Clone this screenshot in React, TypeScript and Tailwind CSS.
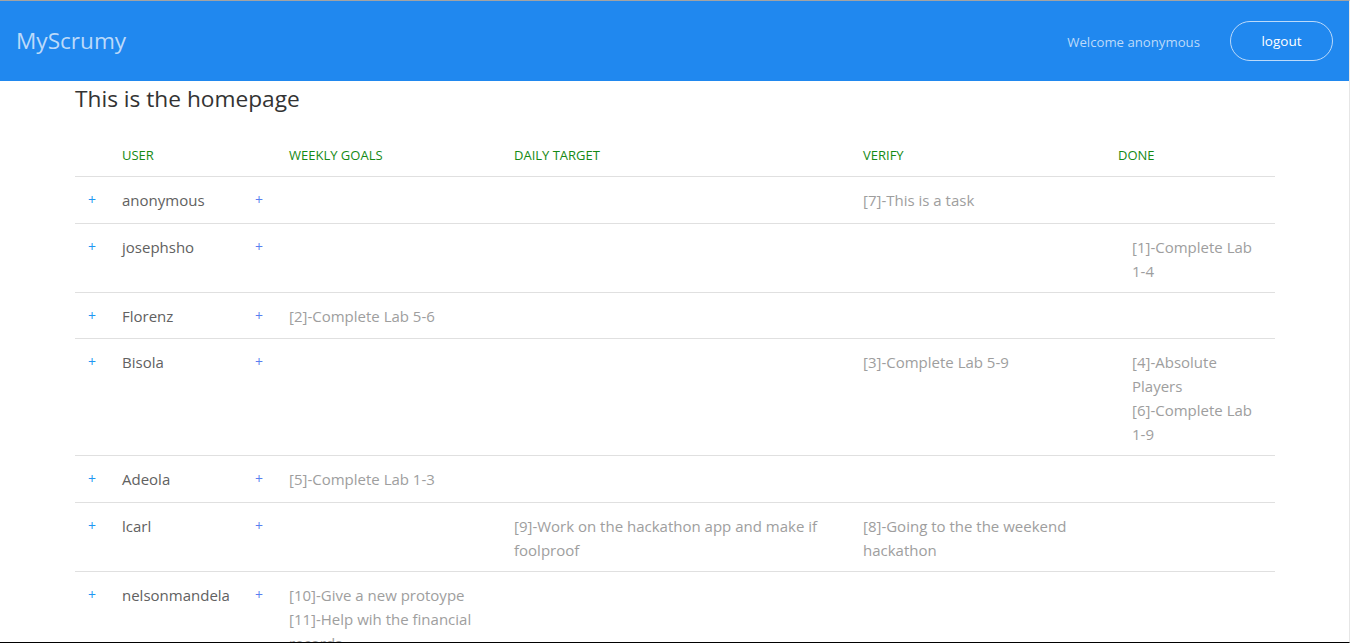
import React from "react";

type Row = {
  user: string;
  weekly: string[];
  daily: string[];
  verify: string[];
  done: string[];
};

const rows: Row[] = [
  { user: "anonymous", weekly: [], daily: [], verify: ["[7]-This is a task"], done: [] },
  { user: "josephsho", weekly: [], daily: [], verify: [], done: ["[1]-Complete Lab 1-4"] },
  { user: "Florenz", weekly: ["[2]-Complete Lab 5-6"], daily: [], verify: [], done: [] },
  {
    user: "Bisola",
    weekly: [],
    daily: [],
    verify: ["[3]-Complete Lab 5-9"],
    done: ["[4]-Absolute Players", "[6]-Complete Lab 1-9"],
  },
  { user: "Adeola", weekly: ["[5]-Complete Lab 1-3"], daily: [], verify: [], done: [] },
  {
    user: "lcarl",
    weekly: [],
    daily: ["[9]-Work on the hackathon app and make if foolproof"],
    verify: ["[8]-Going to the the weekend hackathon"],
    done: [],
  },
  {
    user: "nelsonmandela",
    weekly: ["[10]-Give a new protoype", "[11]-Help wih the financial records"],
    daily: [],
    verify: [],
    done: [],
  },
];

function Tasks({ items, indent }: { items: string[]; indent?: boolean }) {
  return (
    <td
      className={
        indent
          ? "pl-[28px] pr-[14px] pt-[11px] pb-[9px] align-top text-[15px] leading-[24px] text-[#9e9e9e]"
          : "px-[14px] pt-[11px] pb-[9px] align-top text-[15px] leading-[24px] text-[#9e9e9e]"
      }
    >
      {items.map((t) => (
        <div key={t}>{t}</div>
      ))}
    </td>
  );
}

export default function App() {
  return (
    <div
      className="h-[643px] w-[1350px] overflow-hidden border-t border-b border-r border-t-[#a3a3a3] border-b-black border-r-[#e6e6e6] bg-white"
      style={{ fontFamily: '"Open Sans", "Noto Sans", sans-serif' }}
    >
      <nav className="flex h-[80px] items-center justify-between bg-[#2088ef] pl-[16px] pr-[16px]">
        <div className="text-[22.6px] leading-[28px] text-[#bcdafa]">MyScrumy</div>
        <div className="flex items-center gap-[30px]">
          <span className="pt-[3px] text-[13.2px] text-[#bcdafa]">Welcome anonymous</span>
          <button className="h-[40px] w-[103px] rounded-full border border-[#bcdafa] text-[13.5px] text-white">
            logout
          </button>
        </div>
      </nav>
      <div className="ml-[75px] w-[1200px]">
        <h1 className="mt-[5px] mb-[20px] text-[22.7px] leading-[26px] text-[#333333]">
          This is the homepage
        </h1>
        <table className="w-full table-fixed border-collapse">
          <colgroup>
            <col className="w-[33px]" />
            <col className="w-[133px]" />
            <col className="w-[34px]" />
            <col className="w-[225px]" />
            <col className="w-[349px]" />
            <col className="w-[255px]" />
            <col className="w-[171px]" />
          </colgroup>
          <thead>
            <tr className="border-b border-[#e0e0e0] text-left text-[13px] font-normal text-[#158a15]">
              <th className="pt-[11px] pb-[9px] leading-[24px] font-normal"></th>
              <th className="px-[14px] pt-[11px] pb-[9px] leading-[24px] font-normal">USER</th>
              <th className="pt-[11px] pb-[9px] leading-[24px] font-normal"></th>
              <th className="px-[14px] pt-[11px] pb-[9px] leading-[24px] font-normal">WEEKLY GOALS</th>
              <th className="px-[14px] pt-[11px] pb-[9px] leading-[24px] font-normal">DAILY TARGET</th>
              <th className="px-[14px] pt-[11px] pb-[9px] leading-[24px] font-normal">VERIFY</th>
              <th className="px-[14px] pt-[11px] pb-[9px] leading-[24px] font-normal">DONE</th>
            </tr>
          </thead>
          <tbody>
            {rows.map((r) => (
              <tr key={r.user} className="border-b border-[#e0e0e0]">
                <td className="pt-[10px] pb-[9.5px] pl-[13px] align-top text-[14px] leading-[26px] text-[#2196f3]">+</td>
                <td className="px-[14px] pt-[10px] pb-[9.5px] align-top text-[15px] leading-[26px] text-[#616161]">
                  {r.user}
                </td>
                <td className="pt-[10px] pb-[9.5px] pl-[14px] align-top text-[14px] leading-[26px] text-[#5a7ff0]">+</td>
                <Tasks items={r.weekly} />
                <Tasks items={r.daily} />
                <Tasks items={r.verify} />
                <Tasks items={r.done} indent />
              </tr>
            ))}
          </tbody>
        </table>
      </div>
    </div>
  );
}
